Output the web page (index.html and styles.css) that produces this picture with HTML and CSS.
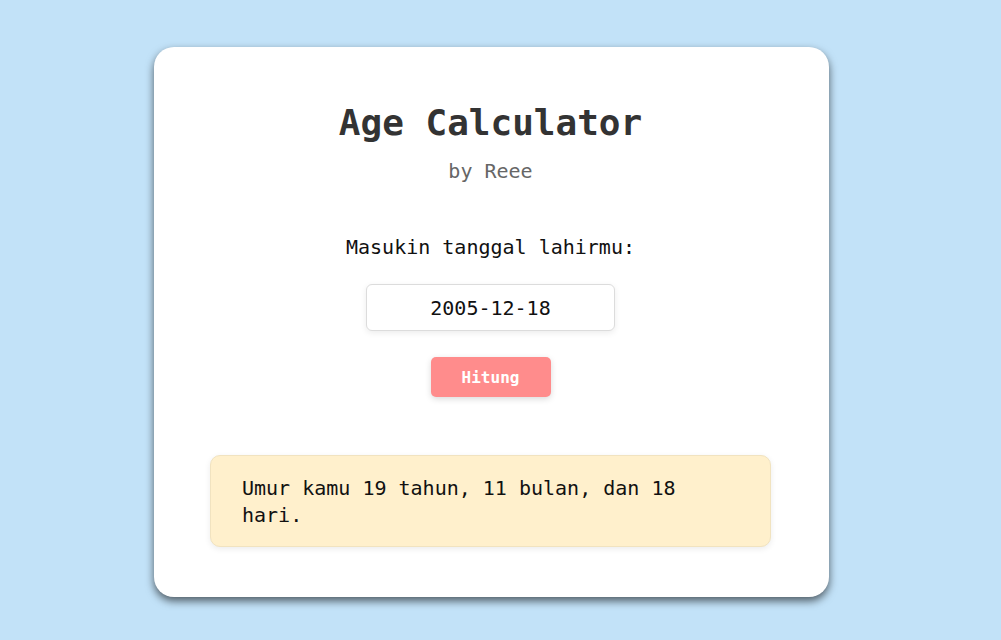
FILE: index.html
```html
<!DOCTYPE html>
<html lang="id">
<head>
<meta charset="utf-8">
<title>Age Calculator</title>
<link rel="stylesheet" href="styles.css">
</head>
<body>
<div class="page">
  <main class="card">
    <h1 class="title">Age Calculator</h1>
    <p class="subtitle">by Reee</p>
    <label class="label" for="dob">Masukin tanggal lahirmu:</label>
    <input class="date" id="dob" type="text" value="2005-12-18">
    <button class="btn" type="button">Hitung</button>
    <div class="result">Umur kamu 19 tahun, 11 bulan, dan 18 hari.</div>
  </main>
</div>
</body>
</html>
```

FILE: styles.css
```css
html, body {
  margin: 0;
  padding: 0;
}
body {
  background: #c2e2f8;
  font-family: "DejaVu Sans Mono", "Liberation Mono", monospace;
  height: 640px;
  overflow: hidden;
}
.page {
  display: flex;
  justify-content: center;
  padding: 47px 18px 0 0;
}
.card {
  width: 675px;
  height: 550px;
  box-sizing: border-box;
  background: #ffffff;
  border-radius: 20px;
  box-shadow: 0 4px 9px rgba(0, 0, 0, 0.6);
  padding: 54px 58px 0 56px;
  display: flex;
  flex-direction: column;
  align-items: center;
}
.title {
  margin: 0;
  font-size: 36px;
  line-height: 44px;
  font-weight: bold;
  color: #333333;
}
.subtitle {
  margin: 12px 0 0 0;
  font-size: 20px;
  line-height: 28px;
  color: #666666;
}
.label {
  margin-top: 48px;
  font-size: 20px;
  line-height: 28px;
  color: #111111;
}
.date {
  margin-top: 23px;
  width: 249px;
  height: 47px;
  box-sizing: border-box;
  border: 1px solid #dcdcdc;
  border-radius: 6px;
  background: #ffffff;
  box-shadow: 0 2px 6px rgba(0, 0, 0, 0.08);
  font-family: "DejaVu Sans Mono", "Liberation Mono", monospace;
  font-size: 20px;
  color: #111111;
  text-align: center;
  padding: 0;
  outline: none;
}
.btn {
  margin-top: 26px;
  width: 120px;
  height: 40px;
  border: none;
  border-radius: 5px;
  background: #ff8c8c;
  color: #ffffff;
  font-family: "DejaVu Sans Mono", "Liberation Mono", monospace;
  font-size: 16px;
  font-weight: bold;
  box-shadow: 0 2px 6px rgba(0, 0, 0, 0.15);
  padding: 0;
}
.result {
  margin-top: 58px;
  align-self: stretch;
  background: #fff0cc;
  border: 1px solid #f1e3c0;
  border-radius: 10px;
  box-shadow: 0 2px 6px rgba(0, 0, 0, 0.08);
  padding: 19px 31px 17px 31px;
  font-size: 20px;
  line-height: 27px;
  color: #111111;
  text-align: left;
}
```
